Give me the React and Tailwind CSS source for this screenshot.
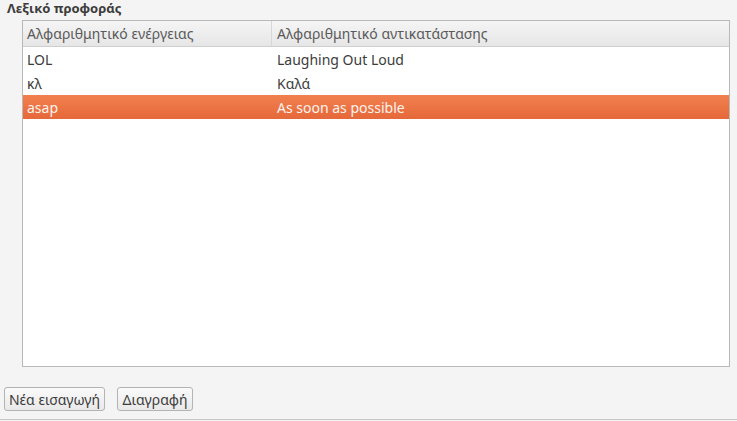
export default function App() {
  const rows = [
    ["LOL", "Laughing Out Loud", false],
    ["κλ", "Καλά", false],
    ["asap", "As soon as possible", true],
  ];
  return (
    <div
      className="w-[737px] h-[421px] bg-[#f4f4f4] relative overflow-hidden text-[#3c3c3c]"
      style={{ fontFamily: '"Noto Sans", "DejaVu Sans", sans-serif' }}
    >
      <div className="h-[19px] flex items-start pl-[7px] text-[13px] font-bold leading-[16px] text-[#3c3c3c]">
        Λεξικό προφοράς
      </div>
      <div className="ml-[22px] mt-[1px] w-[708px] h-[347px] border border-[#b9b9b9] bg-white flex flex-col">
        <div className="h-[26px] flex border-b border-[#cfcfcf] bg-gradient-to-b from-[#f5f5f5] to-[#e6e6e6] text-[14px] text-[#5a5a5a]">
          <div className="w-[249px] pl-[4px] flex items-center border-r border-[#d8d8d8]">
            Αλφαριθμητικό ενέργειας
          </div>
          <div className="flex-1 pl-[5px] flex items-center">Αλφαριθμητικό αντικατάστασης</div>
        </div>
        {rows.map(([a, b, sel]) => (
          <div
            key={a}
            className={
              "h-[24px] flex items-center text-[14px] " +
              (sel
                ? "bg-gradient-to-b from-[#f1804f] to-[#e5683a] text-[#fdf3ee]"
                : "text-[#3c3c3c]")
            }
          >
            <div className="w-[250px] pl-[4px]">{a}</div>
            <div className="flex-1 pl-[4px]">{b}</div>
          </div>
        ))}
      </div>
      <div className="flex gap-[12px] pl-[4px] mt-[20px]">
        <button className="h-[24px] px-[3px] w-[101px] rounded-[3px] border border-[#b3b3b3] bg-gradient-to-b from-[#fafafa] to-[#e9e9e9] text-[14px] text-[#3c3c3c] flex items-center justify-center">
          Νέα εισαγωγή
        </button>
        <button className="h-[24px] px-[3px] w-[76px] rounded-[3px] border border-[#b3b3b3] bg-gradient-to-b from-[#fafafa] to-[#e9e9e9] text-[14px] text-[#3c3c3c] flex items-center justify-center">
          Διαγραφή
        </button>
      </div>
      <div className="absolute left-0 right-0 top-[419px] h-[1px] bg-[#c6c6c6]" />
    </div>
  );
}
